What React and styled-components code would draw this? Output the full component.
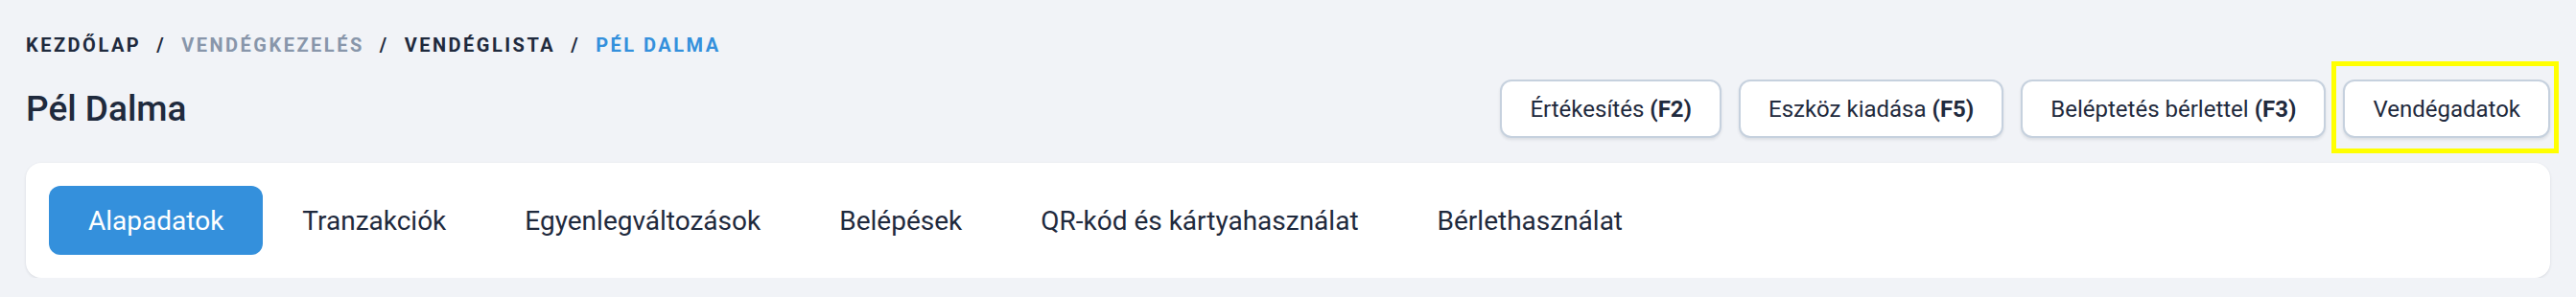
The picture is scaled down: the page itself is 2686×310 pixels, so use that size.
import React, { useState } from 'react'
import styled, { createGlobalStyle } from 'styled-components'

const GlobalStyle = createGlobalStyle`
  body {
    margin: 0;
    background: #f1f3f7;
    font-family: Roboto, "Noto Sans", sans-serif;
    color: #1f2a3d;
  }
`

const Page = styled.div`
  padding: 33px 27px 0 27px;
`

const Crumbs = styled.nav`
  display: flex;
  align-items: center;
  font-size: 20px;
  line-height: 28px;
  font-weight: 700;
  letter-spacing: 0.125em;
  text-transform: uppercase;
`

const Crumb = styled.span`
  color: ${p => (p.$tone === 'muted' ? '#8896aa' : p.$tone === 'active' ? '#3490dc' : '#1f2a3d')};
`

const Slash = styled.span`
  margin: 0 16px;
  color: #1f2a3d;
`

const Header = styled.div`
  display: flex;
  align-items: center;
  justify-content: space-between;
  margin-top: 22px;
`

const Title = styled.h1`
  margin: 0;
  font-size: 37px;
  font-weight: 500;
`

const Actions = styled.div`
  display: flex;
  gap: 18px;
`

const ActionButton = styled.button`
  position: relative;
  height: 61px;
  padding: 0 29px;
  border: 2px solid #c6d1de;
  border-radius: 12px;
  background: #fff;
  box-shadow: 0 2px 3px rgba(30, 42, 61, 0.1);
  font-family: inherit;
  font-size: 24px;
  color: #1f2a3d;
  cursor: pointer;

  b {
    font-weight: 700;
  }
`

const Highlight = styled.span`
  position: absolute;
  left: -14px;
  right: -11px;
  top: -21px;
  bottom: -18px;
  border: 5px solid #ffff00;
  pointer-events: none;
`

const Card = styled.div`
  margin-top: 26px;
  padding: 24px;
  background: #fff;
  border-radius: 16px;
  box-shadow: 0 1px 3px rgba(30, 42, 61, 0.12);
`

const Tabs = styled.div`
  display: flex;
`

const Tab = styled.button`
  height: 72px;
  padding: 0 41px;
  border: 0;
  border-radius: 12px;
  background: ${p => (p.$active ? '#3490dc' : 'transparent')};
  color: ${p => (p.$active ? '#fff' : '#1f2a3d')};
  font-family: inherit;
  font-size: 28px;
  font-weight: 400;
  cursor: pointer;
`

const tabs = [
  'Alapadatok',
  'Tranzakciók',
  'Egyenlegváltozások',
  'Belépések',
  'QR-kód és kártyahasználat',
  'Bérlethasználat',
]

const App = () => {
  const [active, setActive] = useState(0)

  return (
    <>
      <GlobalStyle />
      <Page>
        <Crumbs>
          <Crumb>Kezdőlap</Crumb>
          <Slash>/</Slash>
          <Crumb $tone="muted">Vendégkezelés</Crumb>
          <Slash>/</Slash>
          <Crumb>Vendéglista</Crumb>
          <Slash>/</Slash>
          <Crumb $tone="active">Pél Dalma</Crumb>
        </Crumbs>

        <Header>
          <Title>Pél Dalma</Title>
          <Actions>
            <ActionButton>Értékesítés <b>(F2)</b></ActionButton>
            <ActionButton>Eszköz kiadása <b>(F5)</b></ActionButton>
            <ActionButton>Beléptetés bérlettel <b>(F3)</b></ActionButton>
            <ActionButton>
              Vendégadatok
              <Highlight />
            </ActionButton>
          </Actions>
        </Header>

        <Card>
          <Tabs>
            {tabs.map((t, i) => (
              <Tab key={t} $active={i === active} onClick={() => setActive(i)}>
                {t}
              </Tab>
            ))}
          </Tabs>
        </Card>
      </Page>
    </>
  )
}

export default App
